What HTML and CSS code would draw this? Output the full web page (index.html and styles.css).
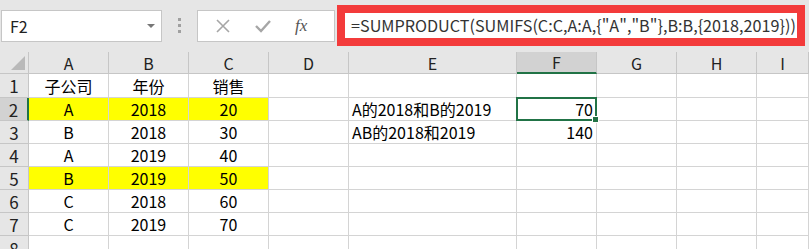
FILE: index.html
```html
<!DOCTYPE html>
<html lang="zh">
<head>
  <meta charset="UTF-8">
  <title>SUMPRODUCT SUMIFS</title>
  <link rel="stylesheet" href="styles.css">
</head>
<body>
  <div class="toolbar">
    <div class="namebox">
      <span class="ref">F2</span>
      <span class="caret"></span>
    </div>
    <div class="grip"><i></i><i></i><i></i></div>
    <div class="fnbox">
      <svg class="fn-icon" width="16" height="16" viewBox="0 0 16 16">
        <path d="M2 2 L14 14 M14 2 L2 14" stroke="#a6a6a6" stroke-width="1.6" fill="none"/>
      </svg>
      <svg class="fn-icon" width="18" height="16" viewBox="0 0 18 16">
        <path d="M2 8 L7 13 L16 3" stroke="#a6a6a6" stroke-width="2.4" fill="none"/>
      </svg>
      <span class="fx">fx</span>
    </div>
    <div class="formula">=SUMPRODUCT(SUMIFS(C:C,A:A,{"A","B"},B:B,{2018,2019}))</div>
  </div>

  <div class="sheet">
    <div class="corner"><span></span></div>
    <div class="colhead">A</div>
    <div class="colhead">B</div>
    <div class="colhead">C</div>
    <div class="colhead">D</div>
    <div class="colhead">E</div>
    <div class="colhead active">F</div>
    <div class="colhead">G</div>
    <div class="colhead">H</div>
    <div class="colhead">I</div>

    <div class="rowhead">1</div>
    <div class="cell center">子公司</div>
    <div class="cell center">年份</div>
    <div class="cell center">销售</div>
    <div class="cell"></div>
    <div class="cell"></div>
    <div class="cell"></div>
    <div class="cell"></div>
    <div class="cell"></div>
    <div class="cell"></div>

    <div class="rowhead active">2</div>
    <div class="cell center yellow">A</div>
    <div class="cell center yellow">2018</div>
    <div class="cell center yellow">20</div>
    <div class="cell"></div>
    <div class="cell">A的2018和B的2019</div>
    <div class="cell right selected">70<span class="handle"></span></div>
    <div class="cell"></div>
    <div class="cell"></div>
    <div class="cell"></div>

    <div class="rowhead">3</div>
    <div class="cell center">B</div>
    <div class="cell center">2018</div>
    <div class="cell center">30</div>
    <div class="cell"></div>
    <div class="cell">AB的2018和2019</div>
    <div class="cell right">140</div>
    <div class="cell"></div>
    <div class="cell"></div>
    <div class="cell"></div>

    <div class="rowhead">4</div>
    <div class="cell center">A</div>
    <div class="cell center">2019</div>
    <div class="cell center">40</div>
    <div class="cell"></div>
    <div class="cell"></div>
    <div class="cell"></div>
    <div class="cell"></div>
    <div class="cell"></div>
    <div class="cell"></div>

    <div class="rowhead">5</div>
    <div class="cell center yellow">B</div>
    <div class="cell center yellow">2019</div>
    <div class="cell center yellow">50</div>
    <div class="cell"></div>
    <div class="cell"></div>
    <div class="cell"></div>
    <div class="cell"></div>
    <div class="cell"></div>
    <div class="cell"></div>

    <div class="rowhead">6</div>
    <div class="cell center">C</div>
    <div class="cell center">2018</div>
    <div class="cell center">60</div>
    <div class="cell"></div>
    <div class="cell"></div>
    <div class="cell"></div>
    <div class="cell"></div>
    <div class="cell"></div>
    <div class="cell"></div>

    <div class="rowhead">7</div>
    <div class="cell center">C</div>
    <div class="cell center">2019</div>
    <div class="cell center">70</div>
    <div class="cell"></div>
    <div class="cell"></div>
    <div class="cell"></div>
    <div class="cell"></div>
    <div class="cell"></div>
    <div class="cell"></div>

    <div class="rowhead last">8</div>
    <div class="cell"></div>
    <div class="cell"></div>
    <div class="cell"></div>
    <div class="cell"></div>
    <div class="cell"></div>
    <div class="cell"></div>
    <div class="cell"></div>
    <div class="cell"></div>
    <div class="cell"></div>
  </div>
</body>
</html>
```

FILE: styles.css
```css
body {
  margin: 0;
  width: 809px;
  height: 249px;
  overflow: hidden;
  background: #e6e6e6;
  font-family: "Noto Sans CJK SC", "Liberation Sans", sans-serif;
  color: #000000;
}

.toolbar {
  display: flex;
  align-items: center;
  height: 52px;
  padding-left: 1px;
  box-sizing: border-box;
  padding-bottom: 1px;
}

.namebox {
  display: flex;
  align-items: center;
  justify-content: space-between;
  width: 161px;
  height: 32px;
  box-sizing: border-box;
  background: #ffffff;
  border: 1px solid #c6c6c6;
  padding: 0 6px 0 8px;
}

.namebox .ref {
  font-size: 16px;
  color: #222222;
}

.caret {
  width: 0;
  height: 0;
  border-left: 4px solid transparent;
  border-right: 4px solid transparent;
  border-top: 4px solid #777777;
}

.grip {
  display: flex;
  flex-direction: column;
  gap: 3px;
  margin: 0 16px 0 16px;
}

.grip i {
  width: 3px;
  height: 3px;
  background: #a0a0a0;
}

.fnbox {
  display: flex;
  align-items: center;
  gap: 23px;
  width: 138px;
  height: 32px;
  box-sizing: border-box;
  background: #ffffff;
  border: 1px solid #c6c6c6;
  padding: 0 0 0 17px;
}

.fx {
  font-family: "Liberation Serif", serif;
  font-style: italic;
  font-size: 17px;
  color: #555555;
}

.formula {
  margin-left: 2px;
  width: 468px;
  height: 41px;
  box-sizing: border-box;
  border: 8px solid #f33b3b;
  background: #ffffff;
  padding-left: 6px;
  font-size: 16.2px;
  line-height: 25px;
  color: #333333;
  white-space: nowrap;
  overflow: hidden;
}

.sheet {
  display: grid;
  grid-template-columns: 29px 80px 80px 80px 80px 168px 80px 80px 80px 52px;
  grid-template-rows: 22px 24px repeat(7, 23px);
  background: #ffffff;
  font-size: 16px;
}

.corner,
.colhead,
.rowhead {
  background: #e6e6e6;
  color: #222222;
  box-sizing: border-box;
  border-right: 1px solid #c6c6c6;
  border-bottom: 1px solid #c6c6c6;
  display: flex;
  align-items: center;
  justify-content: center;
}

.rowhead {
  font-size: 17px;
}

.rowhead.last {
  align-items: flex-start;
}

.corner {
  position: relative;
}

.corner span {
  position: absolute;
  right: 3px;
  bottom: 3px;
  width: 0;
  height: 0;
  border-left: 14px solid transparent;
  border-bottom: 14px solid #b9b9b9;
}

.colhead.active {
  background: #d2d2d2;
  border-bottom: 2px solid #217346;
}

.rowhead.active {
  background: #d2d2d2;
  border-right: 2px solid #217346;
}

.cell {
  box-sizing: border-box;
  border-right: 1px solid #d4d4d4;
  border-bottom: 1px solid #d4d4d4;
  display: flex;
  align-items: center;
  padding: 0 3px;
  white-space: nowrap;
  line-height: 1;
}

.cell.center {
  justify-content: center;
}

.cell.right {
  justify-content: flex-end;
}

.cell.yellow {
  background: #ffff00;
}

.cell.selected {
  position: relative;
  margin: -1px 0 0 -1px;
  border: 2px solid #217346;
  padding-right: 2px;
}

.handle {
  position: absolute;
  right: -4px;
  bottom: -4px;
  width: 5px;
  height: 5px;
  background: #217346;
  border: 1px solid #ffffff;
}
```
